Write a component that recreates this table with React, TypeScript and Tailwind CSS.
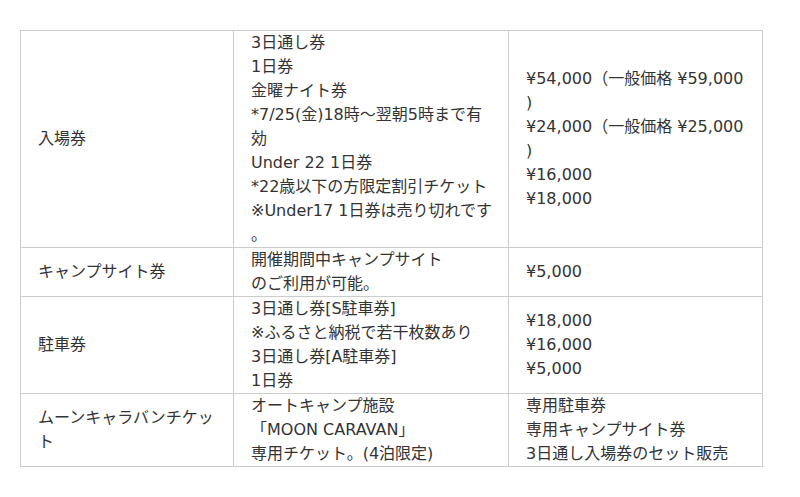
import React from "react";

type Row = {
  label: string[];
  detail: string[];
  price: string[];
};

const rows: Row[] = [
  {
    label: ["入場券"],
    detail: [
      "3日通し券",
      "1日券",
      "金曜ナイト券",
      "*7/25(金)18時～翌朝5時まで有",
      "効",
      "Under 22 1日券",
      "*22歳以下の方限定割引チケット",
      "※Under17 1日券は売り切れです",
      "。",
    ],
    price: [
      "¥54,000（一般価格 ¥59,000",
      ")",
      "¥24,000（一般価格 ¥25,000",
      ")",
      "¥16,000",
      "¥18,000",
    ],
  },
  {
    label: ["キャンプサイト券"],
    detail: ["開催期間中キャンプサイト", "のご利用が可能。"],
    price: ["¥5,000"],
  },
  {
    label: ["駐車券"],
    detail: [
      "3日通し券[S駐車券]",
      "※ふるさと納税で若干枚数あり",
      "3日通し券[A駐車券]",
      "1日券",
    ],
    price: ["¥18,000", "¥16,000", "¥5,000"],
  },
  {
    label: ["ムーンキャラバンチケッ", "ト"],
    detail: ["オートキャンプ施設", "「MOON CARAVAN」", "専用チケット。(4泊限定)"],
    price: ["専用駐車券", "専用キャンプサイト券", "3日通し入場券のセット販売"],
  },
];

function Lines({ lines }: { lines: string[] }) {
  return (
    <>
      {lines.map((line, i) => (
        <div key={i} className="whitespace-nowrap">
          {line}
        </div>
      ))}
    </>
  );
}

export default function App() {
  const cell = "border border-[#ccc] align-middle pl-[17px] pr-2 py-0";

  return (
    <div
      className="bg-white w-[800px] h-[497px] pt-[30px] pl-[20px] text-[#333] text-[16px] leading-[24px]"
      style={{ fontFamily: '"DejaVu Sans", "Noto Sans CJK JP", sans-serif' }}
    >
      <table className="border-collapse table-fixed w-[742px]">
        <colgroup>
          <col className="w-[213px]" />
          <col className="w-[275px]" />
          <col className="w-[254px]" />
        </colgroup>
        <tbody>
          {rows.map((row, i) => (
            <tr key={i}>
              <td className={cell}>
                <Lines lines={row.label} />
              </td>
              <td className={cell}>
                <Lines lines={row.detail} />
              </td>
              <td className={cell}>
                <Lines lines={row.price} />
              </td>
            </tr>
          ))}
        </tbody>
      </table>
    </div>
  );
}
